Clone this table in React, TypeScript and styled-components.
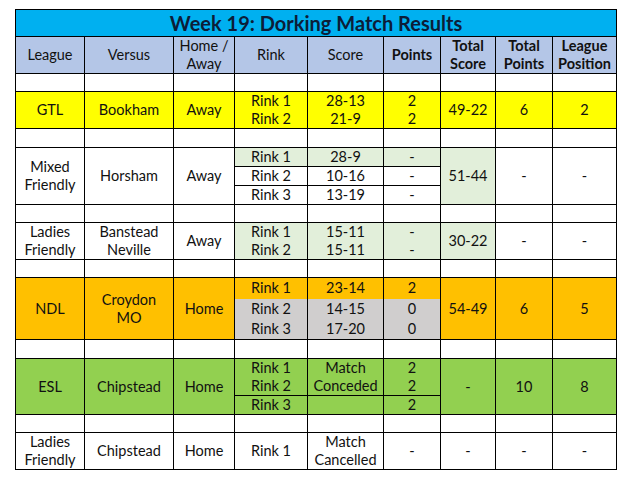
import React from 'react';
import styled, { createGlobalStyle } from 'styled-components';

const GlobalStyle = createGlobalStyle`
  html, body {
    margin: 0;
    padding: 0;
    background: #fff;
  }
  body {
    padding: 9px 0 0 15px;
    font-family: Lato, "Open Sans", sans-serif;
  }
`;

const Sheet = styled.table`
  border-collapse: collapse;
  table-layout: fixed;
  width: 602px;
  font-size: 14.5px;
  color: #111;
`;

const Col = styled.col<{ $w: number }>`
  width: ${p => p.$w}px;
`;

const Row = styled.tr<{ $h: number }>`
  height: ${p => p.$h}px;
`;

const TitleCell = styled.td`
  background: #00b0f0;
  border: 1px solid #000;
  color: #0c1d38;
  font-size: 20px;
  font-weight: 700;
  text-align: center;
  line-height: 24px;
  padding: 0;
`;

const HeadCell = styled.th<{ $bold?: boolean }>`
  background: #b4c6e7;
  border: 1px solid #000;
  font-weight: ${p => (p.$bold ? 700 : 400)};
  line-height: 18px;
  padding: 0;
  text-align: center;
  vertical-align: middle;
`;

const Cell = styled.td<{ $bg?: string; $lh?: number; $openBottom?: boolean }>`
  background: ${p => p.$bg ?? '#fff'};
  border: 1px solid #000;
  line-height: ${p => p.$lh ?? 18}px;
  padding: 0;
  text-align: center;
  vertical-align: middle;
  white-space: nowrap;
  ${p => p.$openBottom && 'border-bottom-style: hidden;'}
`;

const YELLOW = '#ffff00';
const MINT = '#e2efda';
const ORANGE = '#ffc000';
const GREY = '#d0cece';
const GREEN = '#92d050';

const widths = [69, 89, 61, 73, 76, 57, 55, 57, 64];

function Spacer({ h }: { h: number }) {
  return (
    <Row $h={h}>
      {widths.map((_, i) => (
        <Cell key={i} />
      ))}
    </Row>
  );
}

function Lines({ items }: { items: string[] }) {
  return (
    <>
      {items.map((t, i) => (
        <React.Fragment key={i}>
          {i > 0 && <br />}
          {t}
        </React.Fragment>
      ))}
    </>
  );
}

export default function App() {
  return (
    <>
      <GlobalStyle />
      <Sheet>
        <colgroup>
          {widths.map((w, i) => (
            <Col key={i} $w={w} />
          ))}
        </colgroup>
        <tbody>
          <Row $h={27}>
            <TitleCell colSpan={9}>Week 19: Dorking Match Results</TitleCell>
          </Row>
          <Row $h={37}>
            <HeadCell>League</HeadCell>
            <HeadCell>Versus</HeadCell>
            <HeadCell>Home /<br />Away</HeadCell>
            <HeadCell>Rink</HeadCell>
            <HeadCell>Score</HeadCell>
            <HeadCell $bold>Points</HeadCell>
            <HeadCell $bold>Total<br />Score</HeadCell>
            <HeadCell $bold>Total<br />Points</HeadCell>
            <HeadCell $bold>League<br />Position</HeadCell>
          </Row>
          <Spacer h={18} />

          <Row $h={37}>
            <Cell $bg={YELLOW}>GTL</Cell>
            <Cell $bg={YELLOW}>Bookham</Cell>
            <Cell $bg={YELLOW}>Away</Cell>
            <Cell $bg={YELLOW}><Lines items={['Rink 1', 'Rink 2']} /></Cell>
            <Cell $bg={YELLOW}><Lines items={['28-13', '21-9']} /></Cell>
            <Cell $bg={YELLOW}><Lines items={['2', '2']} /></Cell>
            <Cell $bg={YELLOW}>49-22</Cell>
            <Cell $bg={YELLOW}>6</Cell>
            <Cell $bg={YELLOW}>2</Cell>
          </Row>
          <Spacer h={19} />

          <Row $h={19}>
            <Cell rowSpan={3}><Lines items={['Mixed', 'Friendly']} /></Cell>
            <Cell rowSpan={3}>Horsham</Cell>
            <Cell rowSpan={3}>Away</Cell>
            <Cell $bg={MINT}>Rink 1</Cell>
            <Cell $bg={MINT}>28-9</Cell>
            <Cell $bg={MINT}>-</Cell>
            <Cell rowSpan={3} $bg={MINT}>51-44</Cell>
            <Cell rowSpan={3}>-</Cell>
            <Cell rowSpan={3}>-</Cell>
          </Row>
          <Row $h={18}>
            <Cell>Rink 2</Cell>
            <Cell>10-16</Cell>
            <Cell>-</Cell>
          </Row>
          <Row $h={19}>
            <Cell>Rink 3</Cell>
            <Cell>13-19</Cell>
            <Cell>-</Cell>
          </Row>
          <Spacer h={18} />

          <Row $h={37}>
            <Cell><Lines items={['Ladies', 'Friendly']} /></Cell>
            <Cell><Lines items={['Banstead', 'Neville']} /></Cell>
            <Cell>Away</Cell>
            <Cell $bg={MINT}><Lines items={['Rink 1', 'Rink 2']} /></Cell>
            <Cell $bg={MINT}><Lines items={['15-11', '15-11']} /></Cell>
            <Cell $bg={MINT}><Lines items={['-', '-']} /></Cell>
            <Cell $bg={MINT}>30-22</Cell>
            <Cell>-</Cell>
            <Cell>-</Cell>
          </Row>
          <Spacer h={18} />

          <Row $h={21}>
            <Cell rowSpan={2} $bg={ORANGE}>NDL</Cell>
            <Cell rowSpan={2} $bg={ORANGE}><Lines items={['Croydon', 'MO']} /></Cell>
            <Cell rowSpan={2} $bg={ORANGE}>Home</Cell>
            <Cell $bg={ORANGE} $openBottom>Rink 1</Cell>
            <Cell $bg={ORANGE} $openBottom>23-14</Cell>
            <Cell $bg={ORANGE} $openBottom>2</Cell>
            <Cell rowSpan={2} $bg={ORANGE}>54-49</Cell>
            <Cell rowSpan={2} $bg={ORANGE}>6</Cell>
            <Cell rowSpan={2} $bg={ORANGE}>5</Cell>
          </Row>
          <Row $h={41}>
            <Cell $bg={GREY} $lh={20}><Lines items={['Rink 2', 'Rink 3']} /></Cell>
            <Cell $bg={GREY} $lh={20}><Lines items={['14-15', '17-20']} /></Cell>
            <Cell $bg={GREY} $lh={20}><Lines items={['0', '0']} /></Cell>
          </Row>
          <Spacer h={19} />

          <Row $h={37}>
            <Cell rowSpan={2} $bg={GREEN}>ESL</Cell>
            <Cell rowSpan={2} $bg={GREEN}>Chipstead</Cell>
            <Cell rowSpan={2} $bg={GREEN}>Home</Cell>
            <Cell $bg={GREEN}><Lines items={['Rink 1', 'Rink 2']} /></Cell>
            <Cell $bg={GREEN}><Lines items={['Match', 'Conceded']} /></Cell>
            <Cell $bg={GREEN}><Lines items={['2', '2']} /></Cell>
            <Cell rowSpan={2} $bg={GREEN}>-</Cell>
            <Cell rowSpan={2} $bg={GREEN}>10</Cell>
            <Cell rowSpan={2} $bg={GREEN}>8</Cell>
          </Row>
          <Row $h={19}>
            <Cell $bg={GREEN}>Rink 3</Cell>
            <Cell $bg={GREEN} />
            <Cell $bg={GREEN}>2</Cell>
          </Row>
          <Spacer h={18} />

          <Row $h={37}>
            <Cell><Lines items={['Ladies', 'Friendly']} /></Cell>
            <Cell>Chipstead</Cell>
            <Cell>Home</Cell>
            <Cell>Rink 1</Cell>
            <Cell><Lines items={['Match', 'Cancelled']} /></Cell>
            <Cell>-</Cell>
            <Cell>-</Cell>
            <Cell>-</Cell>
            <Cell>-</Cell>
          </Row>
        </tbody>
      </Sheet>
    </>
  );
}
